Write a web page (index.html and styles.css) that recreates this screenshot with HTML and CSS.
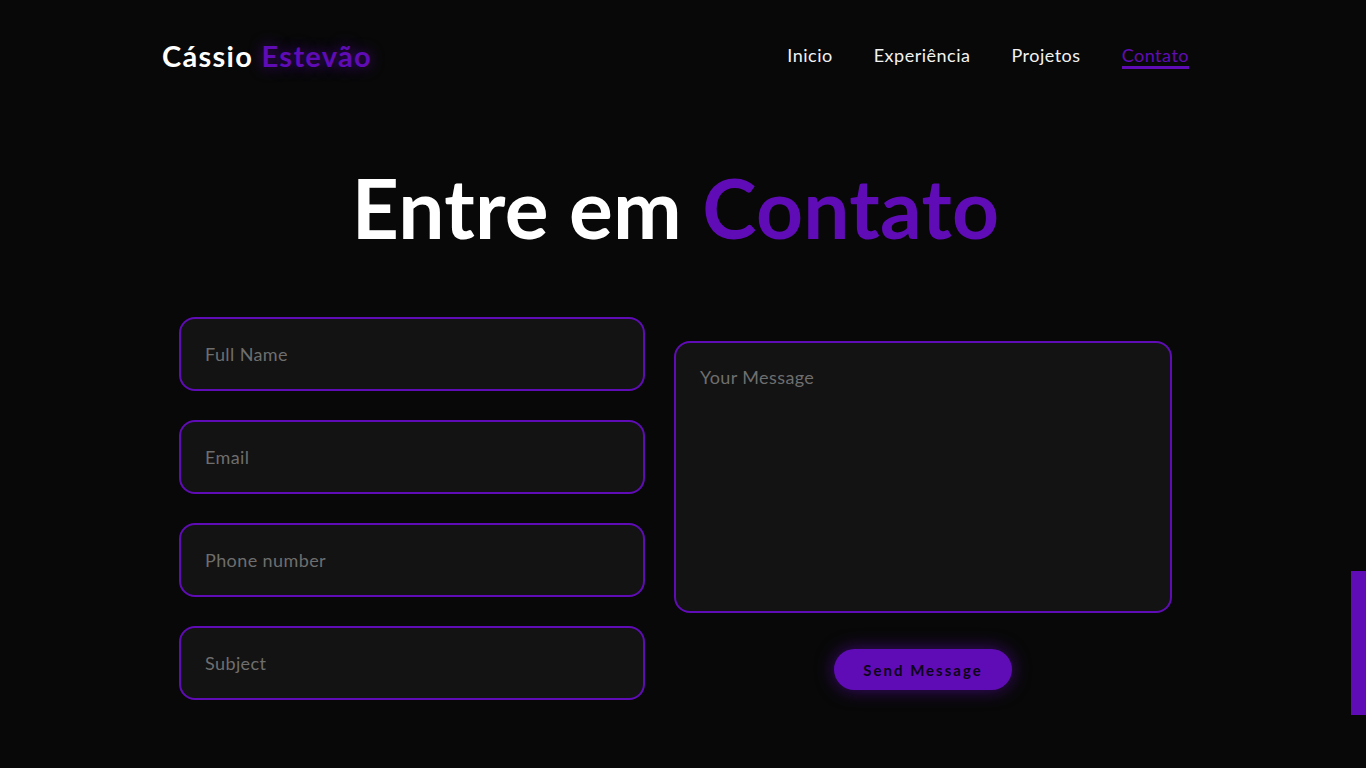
FILE: index.html
```html
<!DOCTYPE html>
<html lang="pt-BR">
<head>
<meta charset="utf-8">
<title>Cássio Estevão - Contato</title>
<link rel="stylesheet" href="styles.css">
</head>
<body>
<div class="page">
  <header class="header">
    <a class="logo" href="#">Cássio <span class="logo-accent">Estevão</span></a>
    <nav class="nav">
      <a class="nav-link" href="#">Inicio</a>
      <a class="nav-link" href="#">Experiência</a>
      <a class="nav-link" href="#">Projetos</a>
      <a class="nav-link active" href="#">Contato</a>
    </nav>
  </header>

  <section class="contact">
    <h1 class="title">Entre em <span class="accent">Contato</span></h1>
    <form class="form">
      <div class="fields">
        <input class="field" type="text" placeholder="Full Name">
        <input class="field" type="email" placeholder="Email">
        <input class="field" type="tel" placeholder="Phone number">
        <input class="field" type="text" placeholder="Subject">
      </div>
      <div class="message-col">
        <textarea class="message" placeholder="Your Message"></textarea>
        <button class="send" type="button">Send Message</button>
      </div>
    </form>
  </section>
</div>
<div class="scroll-thumb"></div>
</body>
</html>
```
FILE: styles.css
```css
* { box-sizing: border-box; }

html, body {
  margin: 0;
  background: #080808;
  height: 100%;
  overflow: hidden;
}

body {
  padding-right: 15px;
  font-family: "Lato", "DejaVu Sans", sans-serif;
  color: #fff;
}

.page {
  width: 100%;
}

.header {
  width: 1027px;
  margin: 0 auto;
  height: 110px;
  display: flex;
  align-items: center;
  justify-content: space-between;
}

.logo {
  font-size: 29px;
  font-weight: 700;
  color: #fff;
  text-decoration: none;
  letter-spacing: 1.3px;
}

.logo-accent {
  color: #600cb6;
  text-shadow: 0 0 14px rgba(96, 12, 182, 0.7);
}

.nav {
  display: flex;
  gap: 41px;
  align-items: center;
}

.nav-link {
  font-size: 18px;
  letter-spacing: 0.5px;
  color: #f2f2f2;
  text-decoration: none;
  position: relative;
}

.nav-link.active {
  color: #600cb6;
}

.nav-link.active::after {
  content: "";
  position: absolute;
  left: 0;
  right: 0;
  bottom: -3px;
  height: 3px;
  background: #600cb6;
}

.contact {
  display: flex;
  flex-direction: column;
  align-items: center;
}

.title {
  margin: 48px 0 0;
  font-size: 82px;
  line-height: 98px;
  font-weight: 700;
  letter-spacing: 0.3px;
}

.accent { color: #600cb6; }

.form {
  margin-top: 61px;
  display: flex;
  gap: 29px;
  align-items: flex-start;
}

.fields {
  width: 466px;
  display: flex;
  flex-direction: column;
  gap: 29px;
}

.field, .message {
  display: block;
  width: 100%;
  background: #131313;
  border: 2px solid #600cb6;
  border-radius: 16px;
  color: #ddd;
  font-family: inherit;
  font-size: 18px;
  letter-spacing: 0.4px;
  outline: none;
}

.field {
  height: 74px;
  padding: 0 24px;
}

.field::placeholder, .message::placeholder {
  color: #6e6e6e;
}

.message-col {
  width: 498px;
  padding-top: 24px;
  display: flex;
  flex-direction: column;
  align-items: center;
  gap: 36px;
}

.message {
  height: 272px;
  padding: 23px 24px;
  resize: none;
}

.send {
  width: 178px;
  height: 41px;
  border: none;
  border-radius: 21px;
  background: #600cb6;
  color: #0c0418;
  font-family: inherit;
  font-weight: 700;
  font-size: 15px;
  letter-spacing: 2px;
  box-shadow: 0 0 18px rgba(96, 12, 182, 0.6);
  cursor: pointer;
}

.scroll-thumb {
  position: fixed;
  right: 0;
  top: 571px;
  width: 15px;
  height: 144px;
  background: #600cb6;
}
```
